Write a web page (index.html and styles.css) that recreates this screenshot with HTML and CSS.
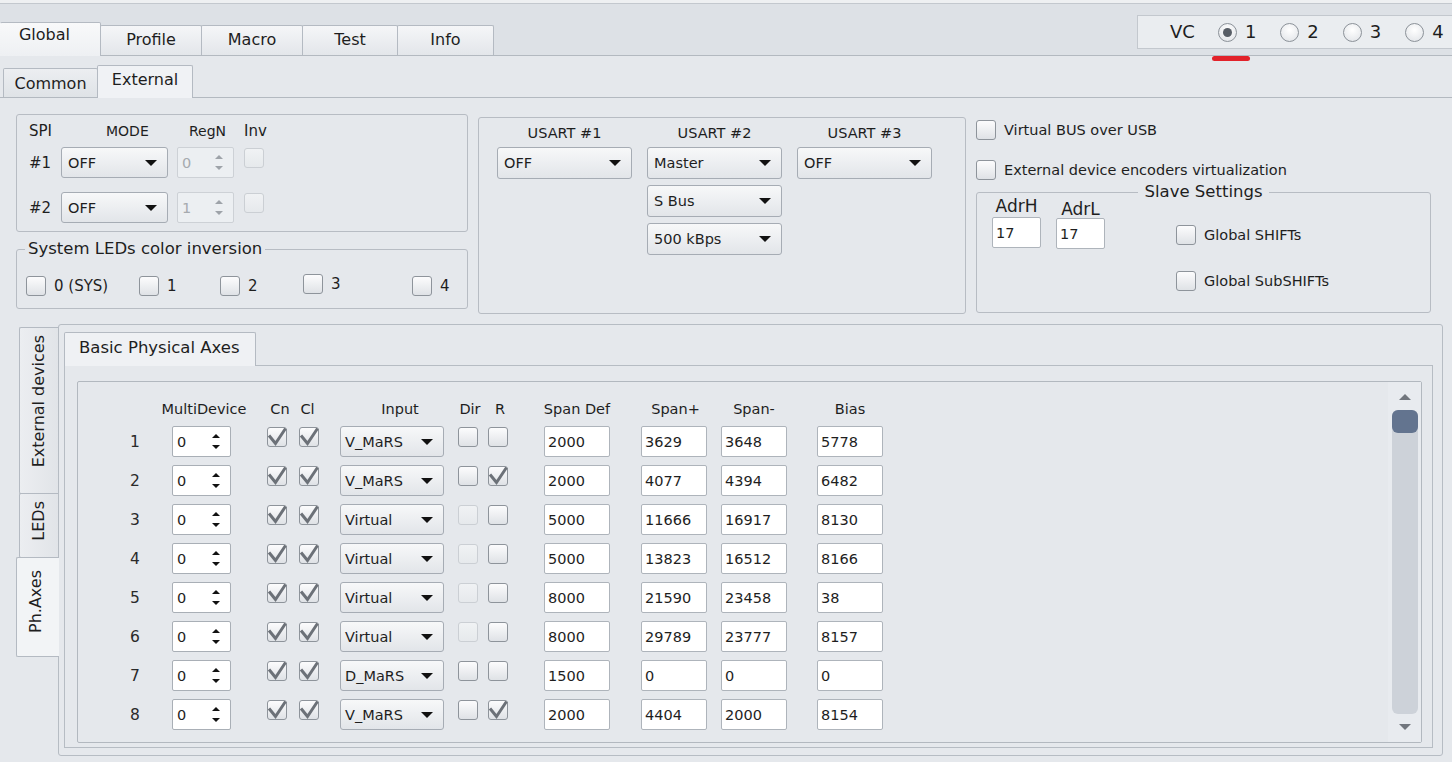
FILE: index.html
```html
<!DOCTYPE html>
<html>
<head>
<meta charset="utf-8">
<title>Global / External</title>
<link rel="stylesheet" href="styles.css">
</head>
<body>
<div class="app">
  <header class="topbar">
    <nav class="maintabs">
      <div class="mtab sel w-global">Global</div>
      <div class="mtab w-profile">Profile</div>
      <div class="mtab w-macro">Macro</div>
      <div class="mtab w-test">Test</div>
      <div class="mtab w-info">Info</div>
    </nav>
    <div class="vc">
      <span class="vc-label">VC</span>
      <span class="ropt active"><span class="radio on"></span>1<span class="vc-mark"></span></span>
      <span class="ropt"><span class="radio"></span>2</span>
      <span class="ropt"><span class="radio"></span>3</span>
      <span class="ropt"><span class="radio"></span>4</span>
    </div>
  </header>

  <nav class="subtabs">
    <div class="stab">Common</div>
    <div class="stab sel">External</div>
  </nav>

  <main class="content">
    <section class="toprow">
      <div class="leftcol">
        <div class="box spi">
          <div class="spi-head">
            <span class="sl">SPI</span>
            <span class="sl small pad-mode">MODE</span>
            <span class="sl small pad-regn">RegN</span>
            <span class="sl">Inv</span>
          </div>
          <div class="spi-row">
            <span class="sl">#1</span>
            <div class="combo w107"><span>OFF</span><i class="caret"></i></div>
            <div class="spin dis w57"><span>0</span><i class="arr"></i></div>
            <i class="cb dis top"></i>
          </div>
          <div class="spi-row second">
            <span class="sl">#2</span>
            <div class="combo w107"><span>OFF</span><i class="caret"></i></div>
            <div class="spin dis w57"><span>1</span><i class="arr"></i></div>
            <i class="cb dis top"></i>
          </div>
        </div>

        <fieldset class="group leds">
          <legend class="lg-left">System LEDs color inversion</legend>
          <div class="leds-row">
            <label class="chk"><i class="cb"></i><span>0 (SYS)</span></label>
            <label class="chk"><i class="cb"></i><span>1</span></label>
            <label class="chk"><i class="cb"></i><span>2</span></label>
            <label class="chk up1"><i class="cb"></i><span>3</span></label>
            <label class="chk"><i class="cb"></i><span>4</span></label>
          </div>
        </fieldset>
      </div>

      <div class="box usart">
        <div class="ucol">
          <div class="ulabel">USART #1</div>
          <div class="combo"><span>OFF</span><i class="caret"></i></div>
        </div>
        <div class="ucol">
          <div class="ulabel">USART #2</div>
          <div class="combo"><span>Master</span><i class="caret"></i></div>
          <div class="combo"><span>S Bus</span><i class="caret"></i></div>
          <div class="combo"><span>500 kBps</span><i class="caret"></i></div>
        </div>
        <div class="ucol">
          <div class="ulabel">USART #3</div>
          <div class="combo"><span>OFF</span><i class="caret"></i></div>
        </div>
      </div>

      <div class="rightcol">
        <label class="chk"><i class="cb"></i><span>Virtual BUS over USB</span></label>
        <label class="chk second"><i class="cb"></i><span>External device encoders virtualization</span></label>
        <fieldset class="group slave">
          <legend class="lg-center">Slave Settings</legend>
          <div class="slave-inner">
            <div class="adr">
              <span class="adr-label">AdrH</span>
              <div class="tf w49">17</div>
            </div>
            <div class="adr adr-l">
              <span class="adr-label">AdrL</span>
              <div class="tf w49">17</div>
            </div>
            <div class="shifts">
              <label class="chk"><i class="cb"></i><span>Global SHIFTs</span></label>
              <label class="chk"><i class="cb"></i><span>Global SubSHIFTs</span></label>
            </div>
          </div>
        </fieldset>
      </div>
    </section>

    <section class="lower">
      <div class="vtabs">
        <div class="vtab ext"><span>External devices</span></div>
        <div class="vtab leds-tab"><span>LEDs</span></div>
        <div class="vtab ph sel"><span>Ph.Axes</span></div>
      </div>

      <div class="outer">
        <div class="itabs"><div class="itab">Basic Physical Axes</div></div>
        <div class="ipanel">
          <div class="scroll">
            <div class="axes">
              <span></span>
              <span class="hd h-multi">MultiDevice</span>
              <span class="hd h-cn">Cn</span>
              <span class="hd h-cl">Cl</span>
              <span class="hd h-input">Input</span>
              <span class="hd h-dir">Dir</span>
              <span class="hd h-r">R</span>
              <span class="hd h-tf">Span Def</span>
              <span class="hd h-tf h-plus">Span+</span>
              <span class="hd h-tf">Span-</span>
              <span class="hd h-tf">Bias</span>

              <span class="n">1</span>
              <div class="spin w59"><span>0</span><i class="arr"></i></div>
              <i class="cb top"><svg viewBox="0 0 20 20"><path d="M2 8.5 L8.5 16.5 L18.5 1.5"/></svg></i>
              <i class="cb top"><svg viewBox="0 0 20 20"><path d="M2 8.5 L8.5 16.5 L18.5 1.5"/></svg></i>
              <div class="combo w104 tc"><span>V_MaRS</span><i class="caret"></i></div>
              <i class="cb top"></i>
              <i class="cb top"></i>
              <div class="tf">2000</div><div class="tf">3629</div><div class="tf">3648</div><div class="tf">5778</div>

              <span class="n">2</span>
              <div class="spin w59"><span>0</span><i class="arr"></i></div>
              <i class="cb top"><svg viewBox="0 0 20 20"><path d="M2 8.5 L8.5 16.5 L18.5 1.5"/></svg></i>
              <i class="cb top"><svg viewBox="0 0 20 20"><path d="M2 8.5 L8.5 16.5 L18.5 1.5"/></svg></i>
              <div class="combo w104 tc"><span>V_MaRS</span><i class="caret"></i></div>
              <i class="cb top"></i>
              <i class="cb top"><svg viewBox="0 0 20 20"><path d="M2 8.5 L8.5 16.5 L18.5 1.5"/></svg></i>
              <div class="tf">2000</div><div class="tf">4077</div><div class="tf">4394</div><div class="tf">6482</div>

              <span class="n">3</span>
              <div class="spin w59"><span>0</span><i class="arr"></i></div>
              <i class="cb top"><svg viewBox="0 0 20 20"><path d="M2 8.5 L8.5 16.5 L18.5 1.5"/></svg></i>
              <i class="cb top"><svg viewBox="0 0 20 20"><path d="M2 8.5 L8.5 16.5 L18.5 1.5"/></svg></i>
              <div class="combo w104 tc"><span>Virtual</span><i class="caret"></i></div>
              <i class="cb top dis"></i>
              <i class="cb top"></i>
              <div class="tf">5000</div><div class="tf">11666</div><div class="tf">16917</div><div class="tf">8130</div>

              <span class="n">4</span>
              <div class="spin w59"><span>0</span><i class="arr"></i></div>
              <i class="cb top"><svg viewBox="0 0 20 20"><path d="M2 8.5 L8.5 16.5 L18.5 1.5"/></svg></i>
              <i class="cb top"><svg viewBox="0 0 20 20"><path d="M2 8.5 L8.5 16.5 L18.5 1.5"/></svg></i>
              <div class="combo w104 tc"><span>Virtual</span><i class="caret"></i></div>
              <i class="cb top dis"></i>
              <i class="cb top"></i>
              <div class="tf">5000</div><div class="tf">13823</div><div class="tf">16512</div><div class="tf">8166</div>

              <span class="n">5</span>
              <div class="spin w59"><span>0</span><i class="arr"></i></div>
              <i class="cb top"><svg viewBox="0 0 20 20"><path d="M2 8.5 L8.5 16.5 L18.5 1.5"/></svg></i>
              <i class="cb top"><svg viewBox="0 0 20 20"><path d="M2 8.5 L8.5 16.5 L18.5 1.5"/></svg></i>
              <div class="combo w104 tc"><span>Virtual</span><i class="caret"></i></div>
              <i class="cb top dis"></i>
              <i class="cb top"></i>
              <div class="tf">8000</div><div class="tf">21590</div><div class="tf">23458</div><div class="tf">38</div>

              <span class="n">6</span>
              <div class="spin w59"><span>0</span><i class="arr"></i></div>
              <i class="cb top"><svg viewBox="0 0 20 20"><path d="M2 8.5 L8.5 16.5 L18.5 1.5"/></svg></i>
              <i class="cb top"><svg viewBox="0 0 20 20"><path d="M2 8.5 L8.5 16.5 L18.5 1.5"/></svg></i>
              <div class="combo w104 tc"><span>Virtual</span><i class="caret"></i></div>
              <i class="cb top dis"></i>
              <i class="cb top"></i>
              <div class="tf">8000</div><div class="tf">29789</div><div class="tf">23777</div><div class="tf">8157</div>

              <span class="n">7</span>
              <div class="spin w59"><span>0</span><i class="arr"></i></div>
              <i class="cb top"><svg viewBox="0 0 20 20"><path d="M2 8.5 L8.5 16.5 L18.5 1.5"/></svg></i>
              <i class="cb top"><svg viewBox="0 0 20 20"><path d="M2 8.5 L8.5 16.5 L18.5 1.5"/></svg></i>
              <div class="combo w104 tc"><span>D_MaRS</span><i class="caret"></i></div>
              <i class="cb top"></i>
              <i class="cb top"></i>
              <div class="tf">1500</div><div class="tf">0</div><div class="tf">0</div><div class="tf">0</div>

              <span class="n">8</span>
              <div class="spin w59"><span>0</span><i class="arr"></i></div>
              <i class="cb top"><svg viewBox="0 0 20 20"><path d="M2 8.5 L8.5 16.5 L18.5 1.5"/></svg></i>
              <i class="cb top"><svg viewBox="0 0 20 20"><path d="M2 8.5 L8.5 16.5 L18.5 1.5"/></svg></i>
              <div class="combo w104 tc"><span>V_MaRS</span><i class="caret"></i></div>
              <i class="cb top"></i>
              <i class="cb top"><svg viewBox="0 0 20 20"><path d="M2 8.5 L8.5 16.5 L18.5 1.5"/></svg></i>
              <div class="tf">2000</div><div class="tf">4404</div><div class="tf">2000</div><div class="tf">8154</div>
            </div>
            <div class="vscroll">
              <i class="sarrow up"></i>
              <div class="track"><div class="thumb"></div></div>
              <i class="sarrow down"></i>
            </div>
          </div>
        </div>
      </div>
    </section>
  </main>
</div>
</body>
</html>
```

FILE: styles.css
```css
* { box-sizing: border-box; }
html, body { margin: 0; padding: 0; }
body {
  width: 1452px;
  height: 762px;
  overflow: hidden;
  background: #e5e8ec;
  font-family: "DejaVu Sans", "Liberation Sans", sans-serif;
  font-size: 14.5px;
  color: #1e1e1e;
}
.app { border-top: 3px solid #eef0f2; }

/* ---------- top bar ---------- */
.topbar {
  height: 53px;
  border-top: 1px solid #c3c8ce;
  border-bottom: 1px solid #b3b9c0;
  background: #dde1e6;
  display: flex;
  justify-content: space-between;
  align-items: flex-end;
}
.maintabs { display: flex; align-items: flex-end; }
.mtab {
  height: 30px;
  border: 1px solid #b4bac2;
  border-bottom: none;
  border-radius: 2px 2px 0 0;
  background: linear-gradient(#f5f6f8, #e3e6ea);
  display: flex;
  justify-content: center;
  padding-top: 5px;
  margin-left: -1px;
  font-size: 16px;
  line-height: 18px;
}
.mtab.sel {
  height: 34px;
  margin-bottom: -1px;
  background: linear-gradient(#f8f9fa, #eef0f3);
  position: relative;
  z-index: 1;
  padding-top: 3px;
  margin-left: 0;
}
.w-global { width: 101px; border-left-color: transparent; padding-right: 12px; }
.w-profile { width: 102px; }
.w-macro { width: 102px; }
.w-test { width: 96px; }
.w-info { width: 97px; }

.vc {
  align-self: flex-start;
  margin-top: 11px;
  margin-right: -5px;
  width: 320px;
  height: 34px;
  background: #eaedf0;
  border: 1px solid #c3c8ce;
  display: flex;
  align-items: center;
  padding-left: 32px;
  font-size: 18px;
  line-height: 20px;
}
.vc-label { margin-right: 23px; }
.ropt {
  display: flex;
  align-items: center;
  gap: 8px;
  margin-right: 24px;
  position: relative;
}
.radio {
  width: 19px;
  height: 19px;
  border-radius: 50%;
  border: 1px solid #8c9299;
  background: radial-gradient(circle at 50% 35%, #ffffff, #dfe2e6);
  display: flex;
  align-items: center;
  justify-content: center;
}
.radio.on::after {
  content: "";
  width: 9px;
  height: 9px;
  border-radius: 50%;
  background: #585e66;
}
.vc-mark {
  position: absolute;
  left: -6px;
  top: 34px;
  width: 38px;
  height: 5px;
  border-radius: 3px;
  background: #e2222a;
}

/* ---------- sub tabs ---------- */
.subtabs {
  height: 42px;
  border-bottom: 1px solid #b3b9c0;
  display: flex;
  align-items: flex-end;
  padding-left: 3px;
}
.stab {
  width: 95px;
  height: 29px;
  border: 1px solid #b4bac2;
  border-bottom: none;
  border-radius: 2px 2px 0 0;
  background: linear-gradient(#eceef1, #dfe3e7);
  font-size: 16px;
  line-height: 18px;
  text-align: center;
  padding-top: 6px;
}
.stab.sel {
  width: 96px;
  height: 33px;
  margin-left: -1px;
  margin-bottom: -1px;
  background: #f0f2f5;
  padding-top: 5px;
  position: relative;
  z-index: 1;
}

/* ---------- content ---------- */
.content { padding: 16px 9px 0 16px; }
.toprow { display: flex; gap: 10px; align-items: flex-start; }
.leftcol { width: 452px; }
.box { border: 1px solid #b7bcc3; border-radius: 3px; }

.spi { height: 118px; padding: 7px 0 0 12px; }
.spi-head, .spi-row {
  display: grid;
  grid-template-columns: 32px 116px 67px 24px;
  align-items: center;
}
.spi-head { height: 18px; line-height: 18px; }
.spi-row { height: 31px; margin-top: 7px; }
.spi-row.second { margin-top: 14px; }
.sl { font-size: 15px; }
.sl.small { font-size: 14px; }
.pad-mode { padding-left: 45px; }
.pad-regn { padding-left: 12px; }

fieldset.group {
  margin: 0;
  padding: 0;
  border: 1px solid #b7bcc3;
  border-radius: 3px;
  min-width: 0;
}
fieldset.group legend {
  font-size: 16.5px;
  line-height: 22px;
}
.lg-left { margin-left: 8px; padding: 0 3px; }
.lg-center { margin: 0 auto; padding: 0 6px; }

fieldset.group.leds { margin-top: 6px; }
.leds-row {
  display: grid;
  grid-template-columns: 113px 81px 83px 109px auto;
  padding: 16px 0 12px 9px;
}
.leds-row .chk span { font-size: 15px; }
.chk {
  display: flex;
  align-items: center;
  gap: 8px;
  height: 20px;
  line-height: 18px;
}
.chk.up1 { margin-top: -2px; }

/* checkbox */
.cb {
  display: block;
  width: 20px;
  height: 20px;
  flex: none;
  border: 1px solid #8e949b;
  border-radius: 3px;
  background: linear-gradient(#fcfcfd, #dfe2e6);
}
.cb.dis { border-color: #cbcfd4; background: linear-gradient(#f0f2f4, #e6e9ec); }
.cb svg {
  display: block;
  width: 20px;
  height: 20px;
  margin: -1px;
  overflow: visible;
}
.cb svg path { fill: none; stroke: #6c7178; stroke-width: 3; }
.cb.top { align-self: start; margin-top: 1px; }

/* combo */
.combo {
  height: 32px;
  border: 1px solid #a6acb4;
  border-radius: 3px;
  background: linear-gradient(#f7f8f9, #e2e5e9);
  display: flex;
  align-items: center;
  justify-content: space-between;
  padding: 0 10px 0 6px;
  white-space: nowrap;
}
.combo.w107 { width: 107px; height: 31px; }
.combo.w104 { width: 104px; height: 31px; }
.combo.tc { padding-left: 4px; }
.caret {
  width: 0;
  height: 0;
  border-left: 6px solid transparent;
  border-right: 6px solid transparent;
  border-top: 6px solid #111;
}

/* spinner */
.spin {
  height: 31px;
  border: 1px solid #a9afb6;
  border-radius: 2px;
  background: #fff;
  display: flex;
  align-items: center;
  justify-content: space-between;
  padding: 0 10px 0 4px;
}
.spin.w57 { width: 57px; }
.spin.w59 { width: 59px; }
.arr { display: flex; flex-direction: column; gap: 7px; }
.arr::before, .arr::after {
  content: "";
  width: 0;
  height: 0;
  border-left: 4px solid transparent;
  border-right: 4px solid transparent;
}
.arr::before { border-bottom: 4px solid #111; }
.arr::after { border-top: 4px solid #111; }
.spin.dis { background: #eceff2; border-color: #cdd1d6; color: #a6aaaf; }
.spin.dis .arr::before { border-bottom-color: #9ea3a9; }
.spin.dis .arr::after { border-top-color: #9ea3a9; }

/* text field */
.tf {
  width: 66px;
  height: 31px;
  border: 1px solid #aeb4bb;
  border-radius: 2px;
  background: #fff;
  display: flex;
  align-items: center;
  padding-left: 3px;
}
.tf.w49 { width: 49px; }

/* USART */
.usart {
  width: 488px;
  height: 197px;
  margin-top: 3px;
  padding: 6px 0 0 18px;
  display: grid;
  grid-template-columns: repeat(3, 135px);
  column-gap: 15px;
  align-items: start;
}
.ucol { display: flex; flex-direction: column; gap: 6px; }
.ulabel { text-align: center; line-height: 18px; margin-bottom: -1px; }

/* right column */
.rightcol { width: 455px; padding-top: 6px; }
.rightcol > .chk.second { margin-top: 20px; }
fieldset.group.slave { margin-top: 1px; padding-bottom: 21px; }
.slave-inner {
  display: flex;
  align-items: flex-start;
  padding-left: 15px;
  margin-top: -6px;
}
.adr { display: flex; flex-direction: column; align-items: center; width: 49px; }
.adr-label { font-size: 17px; line-height: 18px; margin-bottom: 2px; }
.adr-l { margin-left: 15px; margin-top: 3px; }
.adr-l .adr-label { margin-bottom: 0; }
.shifts {
  margin-left: 71px;
  margin-top: 28px;
  display: flex;
  flex-direction: column;
  gap: 26px;
}

/* ---------- lower area ---------- */
.lower { display: flex; height: 432px; margin-top: 10px; }
.vtabs { width: 42px; flex: none; padding-top: 3px; display: flex; flex-direction: column; }
.vtab {
  width: 39px;
  margin-left: 3px;
  border: 1px solid #b4bac2;
  border-right: none;
  border-radius: 2px 0 0 2px;
  background: linear-gradient(90deg, #eceef1, #e1e4e8);
  display: flex;
  align-items: center;
  justify-content: center;
}
.vtab span {
  writing-mode: vertical-rl;
  transform: rotate(180deg);
  font-size: 16px;
  line-height: 20px;
  white-space: nowrap;
}
.vtab.ext { height: 167px; padding-bottom: 18px; }
.vtab.leds-tab { height: 65px; margin-top: -1px; padding-bottom: 10px; }
.vtab.ph {
  height: 100px;
  margin-top: -1px;
  margin-left: 0;
  width: 43px;
  padding-bottom: 12px;
  padding-right: 5px;
  background: #f2f4f6;
  position: relative;
  z-index: 1;
}

.outer {
  flex: 1;
  border: 1px solid #b6bcc3;
  border-radius: 3px;
  padding: 7px 9px 7px 5px;
  display: flex;
  flex-direction: column;
}
.itabs { display: flex; height: 33px; flex: none; }
.itab {
  width: 192px;
  height: 34px;
  border: 1px solid #b4bac2;
  border-bottom: none;
  border-radius: 2px 2px 0 0;
  background: #eff1f4;
  position: relative;
  z-index: 1;
  font-size: 16.5px;
  line-height: 22px;
  padding: 4px 0 0 14px;
}
.ipanel {
  flex: 1;
  border: 1px solid #b6bcc3;
  padding: 15px 10px 4px 12px;
  display: flex;
}
.scroll {
  flex: 1;
  border: 1px solid #b2b8bf;
  border-radius: 2px;
  display: flex;
}
.axes {
  flex: 1;
  padding: 19px 0 0 36px;
  display: grid;
  grid-template-columns: 58px 95px 32px 41px 118px 30px 56px 97px 80px 96px 66px;
  grid-template-rows: 17px;
  grid-auto-rows: 31px;
  row-gap: 8px;
  align-items: center;
  justify-items: start;
  align-content: start;
}
.hd {
  display: flex;
  justify-content: center;
  white-space: nowrap;
  line-height: 17px;
}
.h-multi { width: 59px; padding-left: 5px; }
.h-cn { width: 21px; padding-left: 5px; }
.h-cl { width: 21px; margin-left: -2px; }
.h-input { width: 104px; padding-left: 16px; }
.h-dir { width: 20px; padding-left: 4px; }
.h-r { width: 20px; padding-left: 4px; }
.h-tf { width: 66px; }
.h-plus { padding-left: 3px; }
.n { width: 42px; text-align: center; font-size: 15.5px; color: #2a2a2a; }

.vscroll {
  width: 33px;
  flex: none;
  background: #e8ebef;
  display: flex;
  flex-direction: column;
  align-items: center;
}
.sarrow {
  width: 0;
  height: 0;
  border-left: 6px solid transparent;
  border-right: 6px solid transparent;
}
.sarrow.up { border-bottom: 6px solid #71767d; margin-top: 12px; }
.sarrow.down { border-top: 6px solid #71767d; margin-top: 10px; }
.track {
  width: 26px;
  height: 304px;
  margin-top: 10px;
  border-radius: 6px;
  background: #cdd2d9;
}
.thumb {
  height: 23px;
  border-radius: 6px;
  background: #63748f;
}
```
